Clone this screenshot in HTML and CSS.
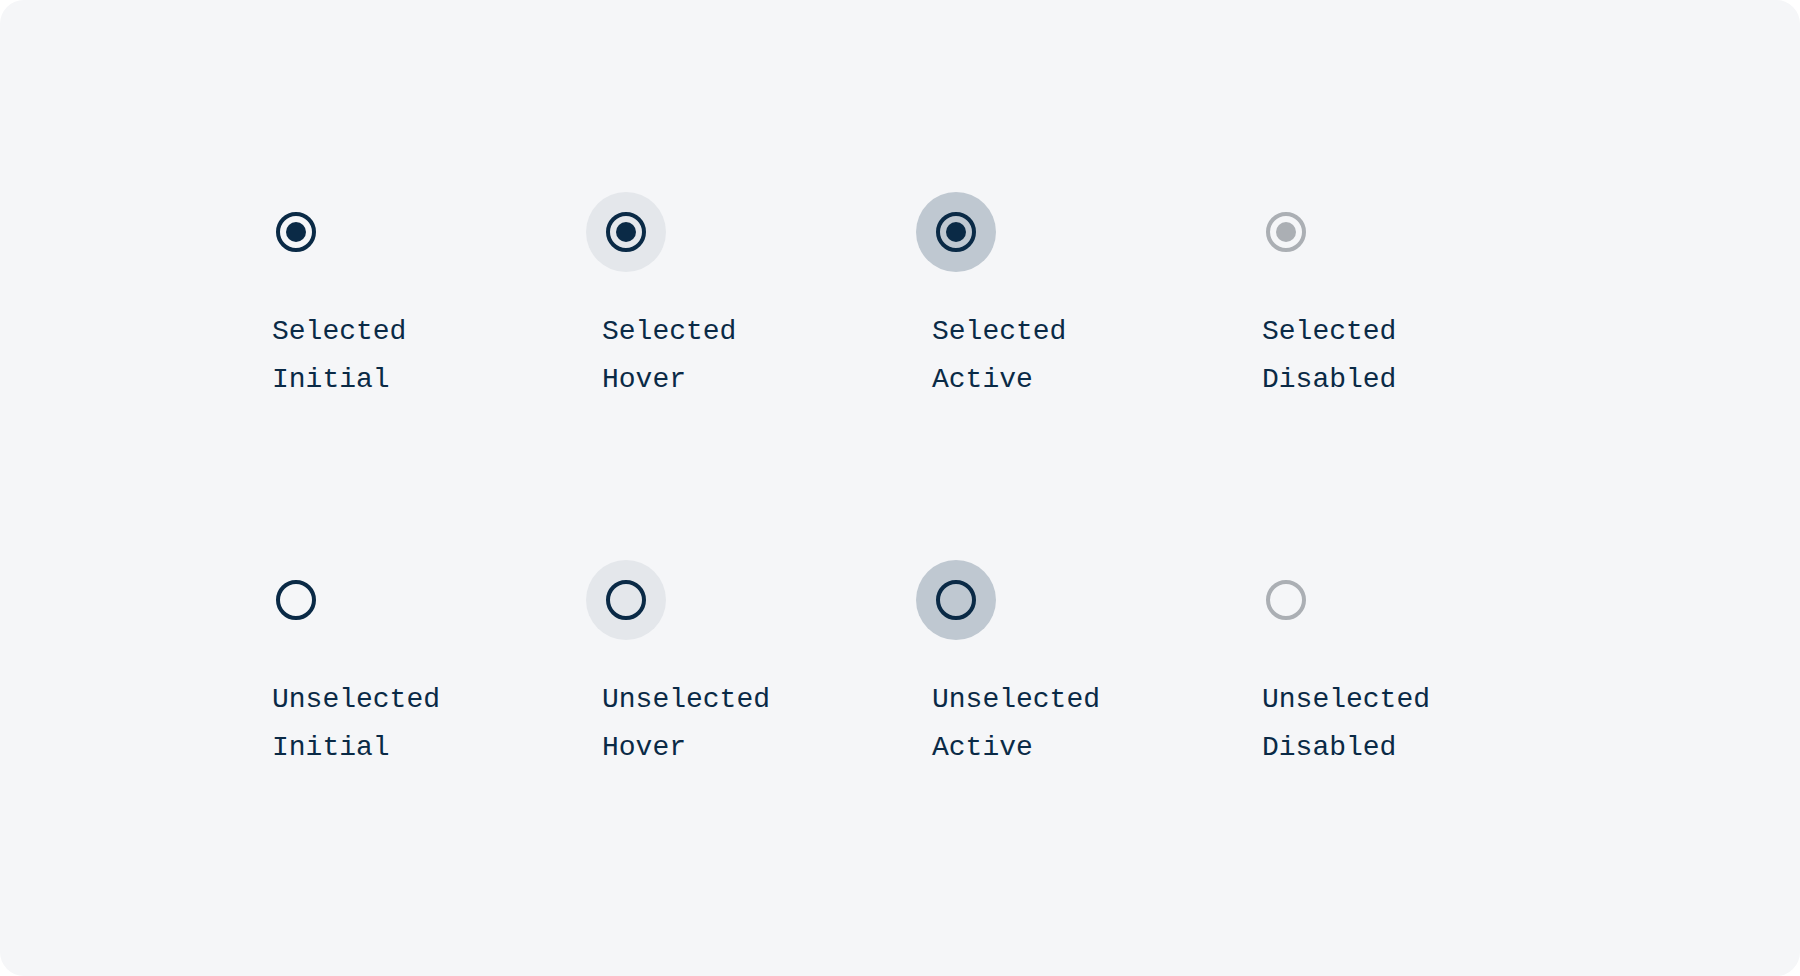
FILE: index.html
```html
<!DOCTYPE html>
<html>
<head>
<meta charset="utf-8">
<link rel="stylesheet" href="styles.css">
</head>
<body>
<div class="card">
  <div class="grid">
    <div class="item">
      <div class="radio-wrap"><span class="radio checked"></span></div>
      <div class="label">Selected<br>Initial</div>
    </div>
    <div class="item">
      <div class="radio-wrap hover"><span class="radio checked"></span></div>
      <div class="label">Selected<br>Hover</div>
    </div>
    <div class="item">
      <div class="radio-wrap active"><span class="radio checked"></span></div>
      <div class="label">Selected<br>Active</div>
    </div>
    <div class="item">
      <div class="radio-wrap"><span class="radio checked disabled"></span></div>
      <div class="label">Selected<br>Disabled</div>
    </div>
    <div class="item">
      <div class="radio-wrap"><span class="radio"></span></div>
      <div class="label">Unselected<br>Initial</div>
    </div>
    <div class="item">
      <div class="radio-wrap hover"><span class="radio"></span></div>
      <div class="label">Unselected<br>Hover</div>
    </div>
    <div class="item">
      <div class="radio-wrap active"><span class="radio"></span></div>
      <div class="label">Unselected<br>Active</div>
    </div>
    <div class="item">
      <div class="radio-wrap"><span class="radio disabled"></span></div>
      <div class="label">Unselected<br>Disabled</div>
    </div>
  </div>
</div>
</body>
</html>
```

FILE: styles.css
```css
html, body {
  margin: 0;
  padding: 0;
  background: #ffffff;
}

.card {
  width: 1800px;
  height: 976px;
  box-sizing: border-box;
  background: #f5f6f8;
  border-radius: 24px;
  padding: 192px 0 0 256px;
}

.grid {
  display: grid;
  grid-template-columns: repeat(4, 330px);
  row-gap: 156px;
}

.item {
  display: flex;
  flex-direction: column;
  gap: 36px;
}

.radio-wrap {
  width: 80px;
  height: 80px;
  border-radius: 50%;
  display: flex;
  align-items: center;
  justify-content: center;
}

.radio-wrap.hover {
  background: #e4e7eb;
}

.radio-wrap.active {
  background: #bfc8d1;
}

.radio {
  width: 40px;
  height: 40px;
  box-sizing: border-box;
  border: 4px solid #0a2a46;
  border-radius: 50%;
  display: flex;
  align-items: center;
  justify-content: center;
}

.radio.checked::after {
  content: "";
  width: 20px;
  height: 20px;
  border-radius: 50%;
  background: #0a2a46;
}

.radio.disabled {
  border-color: #abafb4;
}

.radio.disabled.checked::after {
  background: #abafb4;
}

.label {
  padding-left: 16px;
  font-family: "Courier New", "Nimbus Mono PS", "Nimbus Mono L", FreeMono, "Liberation Mono", monospace;
  font-size: 28px;
  line-height: 48px;
  color: #0a2a46;
}
```
